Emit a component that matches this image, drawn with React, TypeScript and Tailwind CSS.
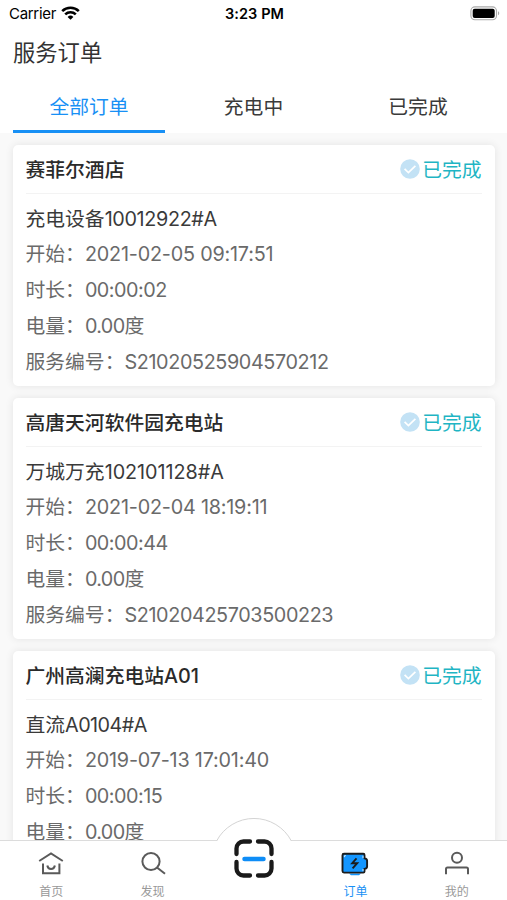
import React from "react";
import clsx from "clsx";

interface Order {
  station: string;
  device: string;
  code: string;
  codeClass: string;
  start: string;
  duration: string;
  energy: string;
  serial?: string;
}

const orders: Order[] = [
  {
    station: "赛菲尔酒店",
    device: "充电设备",
    code: "10012922#A",
    codeClass: "tracking-[-0.35px]",
    start: "2021-02-05 09:17:51",
    duration: "00:00:02",
    energy: "0.00度",
    serial: "S21020525904570212",
  },
  {
    station: "高唐天河软件园充电站",
    device: "万城万充",
    code: "102101128#A",
    codeClass: "tracking-[-0.05px]",
    start: "2021-02-04 18:19:11",
    duration: "00:00:44",
    energy: "0.00度",
    serial: "S21020425703500223",
  },
  {
    station: "广州高澜充电站A01",
    device: "直流",
    code: "A0104#A",
    codeClass: "tracking-[-0.55px]",
    start: "2019-07-13 17:01:40",
    duration: "00:00:15",
    energy: "0.00度",
  },
];

const tabs = ["全部订单", "充电中", "已完成"];

function StatusBar() {
  return (
    <div className="grid h-7 grid-cols-3 items-center pl-[9px] pr-[7px] text-black">
      <div className="flex items-center gap-[5px]">
        <span className="text-[15px] leading-7 tracking-[-0.3px]">Carrier</span>
        <svg className="-mt-[2px]" width="19" height="14" viewBox="0 0 19 14" fill="none" stroke="#000" strokeWidth="2.6">
          <path d="M1.2 5.1a11.9 11.9 0 0 1 16.6 0" />
          <path d="M4.2 8.4a7.7 7.7 0 0 1 10.6 0" />
          <path d="M9.5 13.8 6.6 10.9a4.2 4.2 0 0 1 5.8 0z" fill="#000" stroke="none" />
        </svg>
      </div>
      <span className="text-center text-[14.5px] font-semibold tracking-[0.1px]">3:23 PM</span>
      <svg className="-mt-[2px] justify-self-end" width="30" height="15" viewBox="0 0 30 15">
        <rect x="0.9" y="0.9" width="25.6" height="12.8" rx="4" fill="#fff" stroke="#aaa" strokeWidth="1.1" />
        <rect x="2.7" y="2.7" width="22" height="9.2" rx="2" fill="#000" />
        <path d="M28 5.3c1.7.6 1.7 3.4 0 4z" fill="#aaa" />
      </svg>
    </div>
  );
}

function Tabs() {
  return (
    <div className="grid grid-cols-[152px_1fr_152px] px-[13px]">
      {tabs.map((tab, i) => (
        <button
          key={tab}
          className={clsx(
            "h-[53px] border-b-[3px] pt-[4px] text-[19.8px] leading-[46px]",
            i === 0 ? "border-[#1890f5] text-[#1890f5]" : "border-transparent text-[#3a3a3a]"
          )}
        >
          {tab}
        </button>
      ))}
    </div>
  );
}

function Row({ label, value, valueClass }: { label: string; value: string; valueClass: string }) {
  return (
    <div className="flex h-9 items-center text-[#6a6a6a]">
      <span>{label}：</span>
      <span className={valueClass}>{value}</span>
    </div>
  );
}

function OrderCard({ order }: { order: Order }) {
  return (
    <div className="h-[241px] rounded-[5px] bg-white px-[13px] text-[19.8px] shadow-[0_0_8px_rgba(0,0,0,0.09)]">
      <div className="flex h-[49px] items-center justify-between border-b border-[#f3f3f3]">
        <span className="pt-[3px] font-medium text-[#2a2a2a]">{order.station}</span>
        <div className="flex items-center gap-[2px] text-[#1fb5c4]">
          <svg width="20" height="20" viewBox="0 0 20 20">
            <circle cx="10" cy="10" r="9.8" fill="#c3e2f5" />
            <path d="m4.6 9.8 3.8 3.8 7-6.8" fill="none" stroke="#fff" strokeWidth="1.7" />
          </svg>
          <span className="pt-[3px]">已完成</span>
        </div>
      </div>
      <div className="pt-2">
        <div className="flex h-[35px] items-center pt-px text-[#3a3a3a]">
          <span>{order.device}</span>
          <span className={order.codeClass}>{order.code}</span>
        </div>
        <Row label="开始" value={order.start} valueClass="tracking-[-0.2px]" />
        <Row label="时长" value={order.duration} valueClass="tracking-[-0.5px]" />
        <Row label="电量" value={order.energy} valueClass="tracking-[-0.6px]" />
        {order.serial && <Row label="服务编号" value={order.serial} valueClass="tracking-[-0.38px]" />}
      </div>
    </div>
  );
}

function NavItem({ label, active, children }: { label: string; active?: boolean; children: React.ReactNode }) {
  return (
    <button
      className={clsx(
        "flex flex-col items-center gap-[6px] pl-px pt-[8px] text-[12px]",
        active ? "text-[#1890f5]" : "text-[#999]"
      )}
    >
      <svg width="30" height="30" viewBox="0 0 30 30" fill="none" stroke="#5a5a5a" strokeWidth="2">
        {children}
      </svg>
      <span className="leading-[14px]">{label}</span>
    </button>
  );
}

function BottomNav() {
  return (
    <nav className="relative grid h-[60px] shrink-0 grid-cols-5 border-t border-[#dcdcdc] bg-white">
      <NavItem label="首页">
        <path d="M3.2 12 15 4.5 26.8 12" />
        <path d="M7 14.5v9.8h16.400V14.5" />
        <path d="M11.3 16.5c.8 4.6 6.7 4.6 7.6 0" />
      </NavItem>
      <NavItem label="发现">
        <circle cx="13" cy="12.500" r="8.600" />
        <path d="m19 18.500 8 6.300" />
      </NavItem>
      {/* Raised scan button */}
      <div className="relative">
        <svg className="absolute -top-[23px] left-[6.500px]" width="90" height="70" viewBox="0 0 90 70" fill="none">
          <path d="M7.600 23C15 9.500 28.500 0.800 45 0.800S75 9.500 82.400 23V26H7.600z" fill="#fff" />
          <path d="M7.600 23A42.300 42.300 0 0 1 82.400 23" stroke="#d4d4d4" />
          <g stroke="#1a1a1a" strokeWidth="4.300" strokeLinecap="round">
            <path d="M27.500 36v-5.500a7 7 0 0 1 7-7H41" />
            <path d="M49 23.500h6.500a7 7 0 0 1 7 7V36" />
            <path d="M27.500 44v6.500a7 7 0 0 0 7 7H41" />
            <path d="M49 57.500h6.500a7 7 0 0 0 7-7V44" />
          </g>
          <path d="M35.500 41h19" stroke="#0e8df7" strokeWidth="4.500" strokeLinecap="round" />
        </svg>
      </div>
      <NavItem label="订单" active>
        <path d="M9 24.500h12l-2 1.800H11z" fill="#1496ff" stroke="none" />
        <path d="M4 4.800h19.300q1.200 0 1.200 1.300v3.200q2.600.5 2.600 2.500v5.600q0 2-2.600 2.500v2.500q0 1.200-1.200 1.200H4q-1.500 0-1.500-1.500V6.300q0-1.500 1.500-1.500z" fill="#1496ff" stroke="#1c1c1c" strokeWidth="1.900" />
        <path d="M4.400 8.200V6.700h1.500M23 6.700v2.500M23 20v2.200" stroke="#d8ecfb" strokeWidth="1" />
        <path d="m16.500 9.300-4.300 4.900h5l-4.600 5.200" stroke="#1c1c1c" strokeWidth="1.900" />
      </NavItem>
      <NavItem label="我的">
        <circle cx="15" cy="8.700" r="5" />
        <path d="M4 25.200v-5.200q0-1.500 1.500-1.500h19q1.500 0 1.500 1.500v5.200" />
      </NavItem>
    </nav>
  );
}

export default function App() {
  return (
    <div className="flex h-[900px] w-[507px] flex-col overflow-hidden bg-[#f9f9f9] font-['Inter','Noto_Sans_CJK_SC',sans-serif]">
      <header className="shrink-0 bg-white">
        <StatusBar />
        <h1 className="flex h-[52px] items-center pb-[2px] pl-[13px] text-[22.3px] text-[#333]">服务订单</h1>
        <Tabs />
      </header>
      <main className="flex min-h-0 flex-1 flex-col gap-3 overflow-hidden px-[12.5px] pt-3">
        {orders.map((order) => (
          <div key={order.station} className="shrink-0">
            <OrderCard order={order} />
          </div>
        ))}
      </main>
      <BottomNav />
    </div>
  );
}
